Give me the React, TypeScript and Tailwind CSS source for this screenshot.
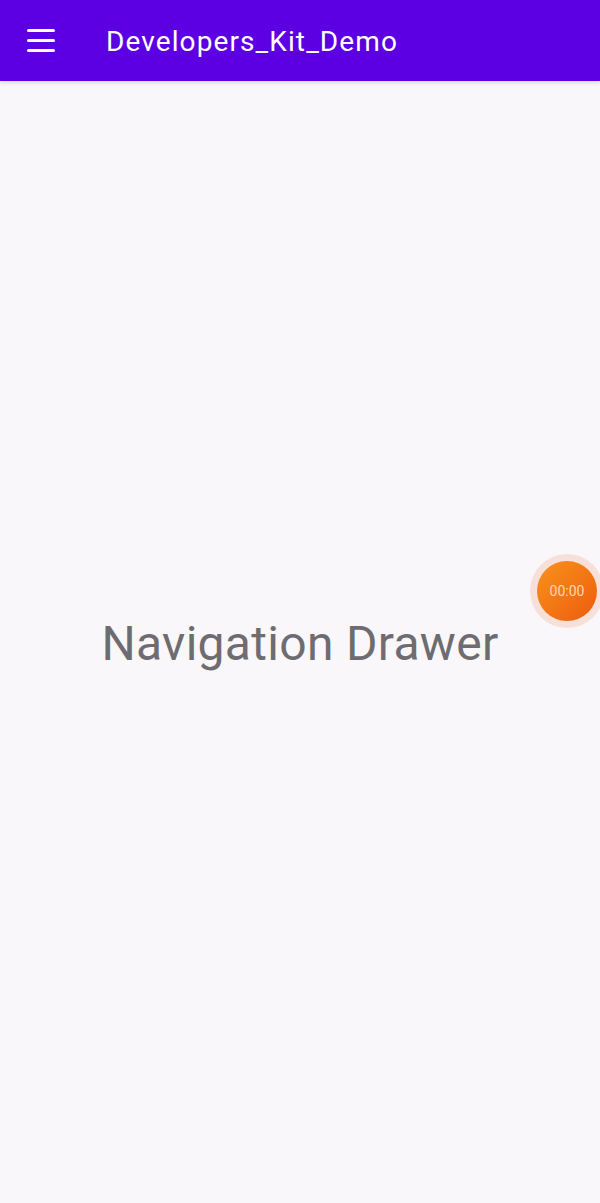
export default function App() {
  return (
    <div className="relative w-[600px] h-[1203px] bg-[#f9f7fa] overflow-hidden font-['Roboto',sans-serif]">
      {/* App bar */}
      <header className="h-[81px] bg-[#5c00e3] flex items-center shadow-[0_2px_4px_rgba(0,0,0,0.12)]">
        <button className="ml-[27px] w-[28px] flex flex-col gap-[7px]">
          <span className="block h-[3px] bg-white rounded-sm" />
          <span className="block h-[3px] bg-white rounded-sm" />
          <span className="block h-[3px] bg-white rounded-sm" />
        </button>
        <h1 className="ml-[51px] text-white text-[28px] tracking-[1.1px] leading-none mt-[2px]">
          Developers_Kit_Demo
        </h1>
      </header>

      {/* Content */}
      <main className="h-[1122px] flex items-center justify-center">
        <p className="text-[48px] text-[#6e6c70] tracking-[0.3px] mt-[4px]">
          Navigation Drawer
        </p>
      </main>

      {/* Floating timer */}
      <div className="absolute left-[530px] top-[554px] w-[74px] h-[74px] rounded-full bg-[#f8e0da] flex items-center justify-center">
        <div className="w-[60px] h-[60px] rounded-full bg-gradient-to-br from-[#f7921c] to-[#ee5a0c] flex items-center justify-center">
          <span className="text-[14px] text-[#ffd7b0]">00:00</span>
        </div>
      </div>
    </div>
  );
}
